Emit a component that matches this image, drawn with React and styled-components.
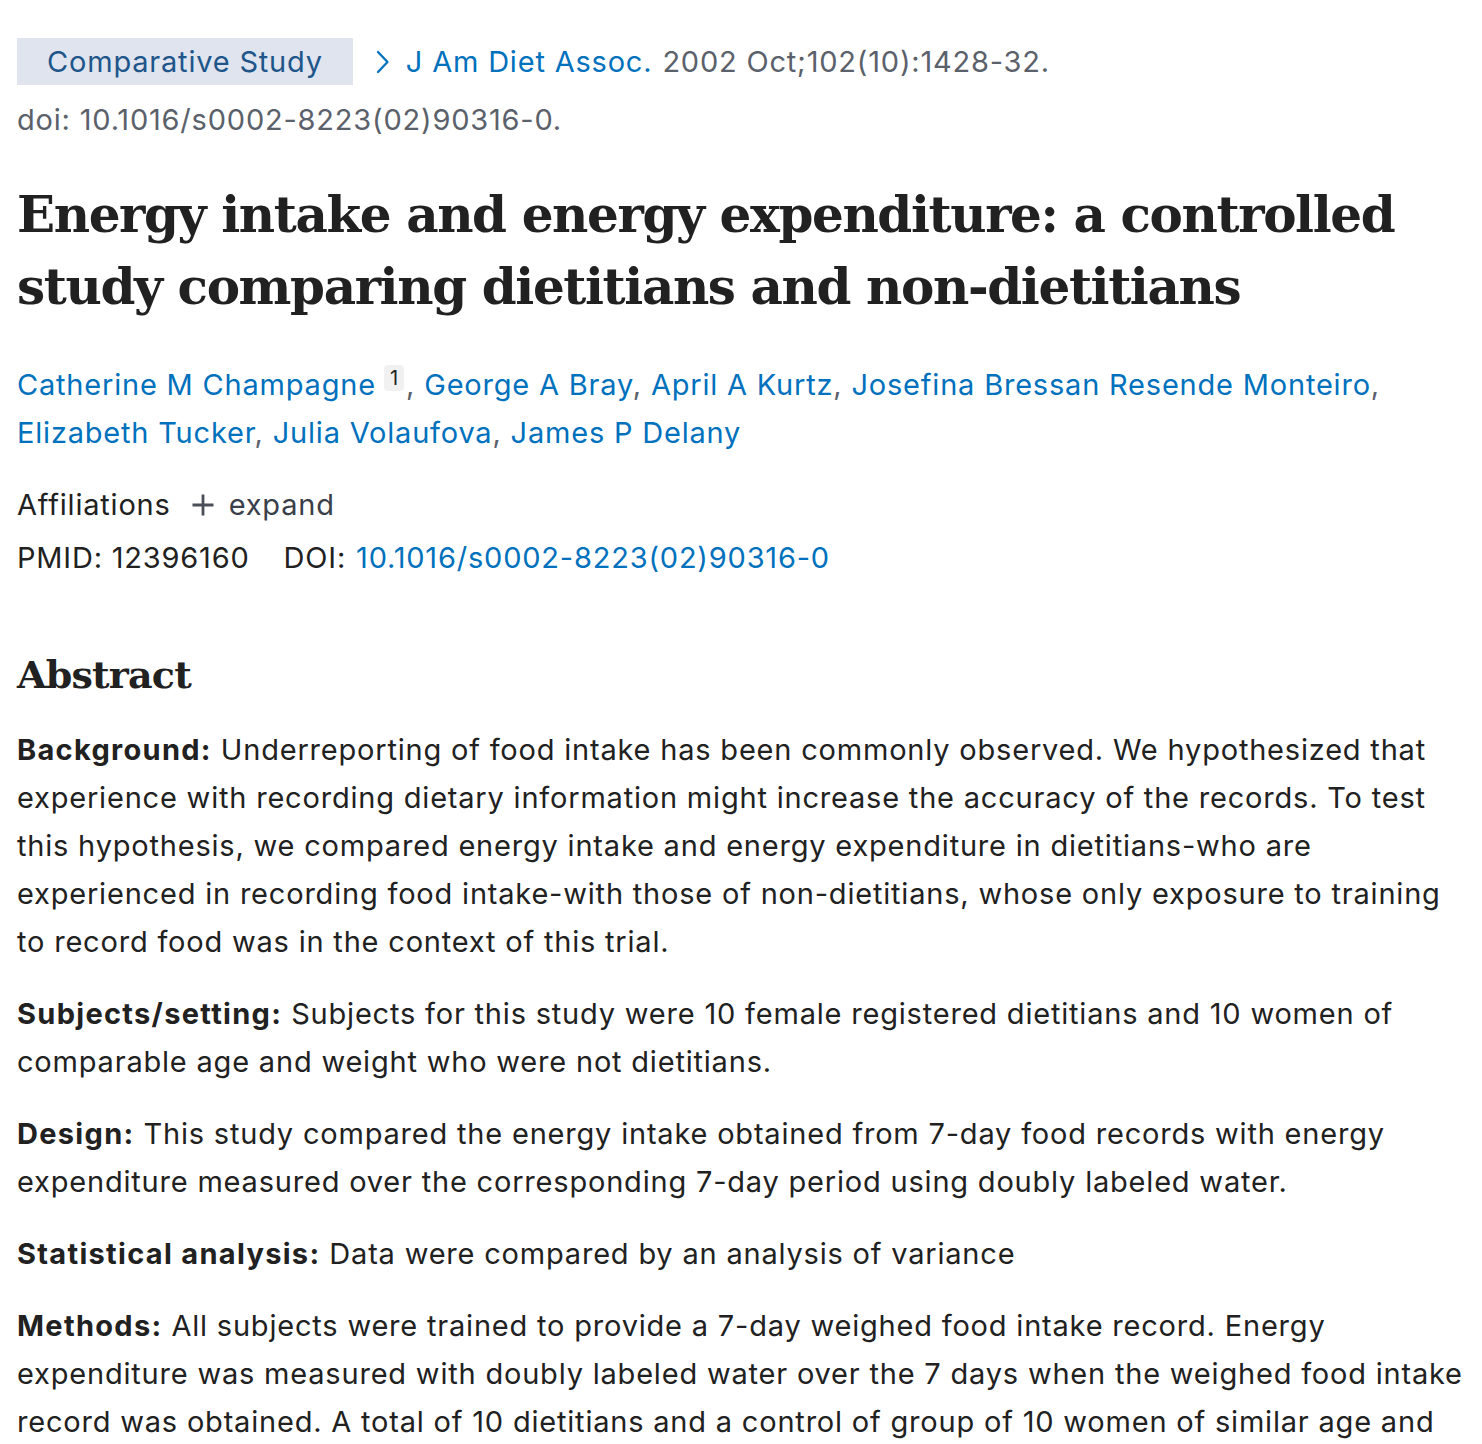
import React from "react";
import styled, { createGlobalStyle } from "styled-components";

const Global = createGlobalStyle`
  html, body { margin: 0; padding: 0; background: #ffffff; }
  body {
    font-family: Inter, "Noto Sans", "Liberation Sans", sans-serif;
    color: #212121;
    -webkit-font-smoothing: antialiased;
  }
  a { text-decoration: none; }
`;

const Page = styled.main`
  padding: 38px 16px 0 17px;
  font-size: 29px;
  letter-spacing: 0.8px;
`;

const CitationRow = styled.div`
  display: flex;
  align-items: center;
  height: 47px;
  color: #5b616b;
  white-space: nowrap;
`;

const TypeBadge = styled.span`
  display: inline-flex;
  align-items: center;
  height: 47px;
  padding: 0 30px;
  background: #dfe4ef;
  color: #20558a;
  margin-right: 21px;
`;

const Chevron = styled.svg`
  width: 18px;
  height: 26px;
  margin-right: 14px;
  flex: none;
`;

const JournalLink = styled.a`
  color: #0071bc;
  margin-right: 10px;
`;

const DoiLine = styled.div`
  color: #5b616b;
  line-height: 48px;
  margin-top: 11px;
`;

const Title = styled.h1`
  font-family: "DejaVu Serif", "Liberation Serif", serif;
  font-weight: 700;
  font-size: 50px;
  line-height: 72px;
  letter-spacing: -1.4px;
  margin: 35px 0 38px;
  color: #212121;
`;

const Authors = styled.div`
  line-height: 48px;
  color: #5b616b;
`;

const AuthorLink = styled.a`
  color: #0071bc;
`;

const AffRef = styled.sup`
  display: inline-block;
  font-size: 20px;
  line-height: 26px;
  letter-spacing: 0;
  padding: 0 6px;
  margin: 0 2px 0 8px;
  background: #f1f1f1;
  border-radius: 4px;
  color: #212121;
  vertical-align: 10px;
`;

const MetaRow = styled.div`
  display: flex;
  align-items: center;
  line-height: 48px;
  margin-top: ${(p) => p.$top || 0}px;
`;

const ExpandToggle = styled.span`
  display: inline-flex;
  align-items: center;
  margin-left: 20px;
  color: #3a3f4a;
  gap: 14px;
`;

const Label = styled.span`
  margin-right: ${(p) => p.$gap || 0}px;
`;

const DoiLink = styled.a`
  color: #0071bc;
  margin-left: 10px;
`;

const AbstractHeading = styled.h2`
  font-family: "DejaVu Serif", "Liberation Serif", serif;
  font-weight: 700;
  font-size: 38px;
  letter-spacing: -0.8px;
  line-height: 50px;
  margin: 68px 0 26px;
`;

const Para = styled.p`
  margin: 0 0 24px;
  line-height: 48px;
`;

const Key = styled.strong`
  font-weight: 700;
  letter-spacing: 1.3px;
`;

const sections = [
  ["Background:", "Underreporting of food intake has been commonly observed. We hypothesized that experience with recording dietary information might increase the accuracy of the records. To test this hypothesis, we compared energy intake and energy expenditure in dietitians-who are experienced in recording food intake-with those of non-dietitians, whose only exposure to training to record food was in the context of this trial."],
  ["Subjects/setting:", "Subjects for this study were 10 female registered dietitians and 10 women of comparable age and weight who were not dietitians."],
  ["Design:", "This study compared the energy intake obtained from 7-day food records with energy expenditure measured over the corresponding 7-day period using doubly labeled water."],
  ["Statistical analysis:", "Data were compared by an analysis of variance"],
  ["Methods:", "All subjects were trained to provide a 7-day weighed food intake record. Energy expenditure was measured with doubly labeled water over the 7 days when the weighed food intake record was obtained. A total of 10 dietitians and a control of group of 10 women of similar age and weight who were not dietitians completed the study."],
];

const authors = [
  "Catherine M Champagne",
  "George A Bray",
  "April A Kurtz",
  "Josefina Bressan Resende Monteiro",
  "Elizabeth Tucker",
  "Julia Volaufova",
  "James P Delany",
];

export default function App() {
  return (
    <>
      <Global />
      <Page>
        <CitationRow>
          <TypeBadge>Comparative Study</TypeBadge>
          <Chevron viewBox="0 0 18 26" fill="none">
            <path d="M4 3 L13.5 13 L4 23" stroke="#0071bc" strokeWidth="2.3" strokeLinecap="round" strokeLinejoin="round" />
          </Chevron>
          <JournalLink href="#">J Am Diet Assoc.</JournalLink>
          <span>2002 Oct;102(10):1428-32.</span>
        </CitationRow>
        <DoiLine>doi: 10.1016/s0002-8223(02)90316-0.</DoiLine>

        <Title>
          Energy intake and energy expenditure: a controlled study comparing dietitians and non&#8209;dietitians
        </Title>

        <Authors>
          {authors.map((a, i) => (
            <React.Fragment key={a}>
              <AuthorLink href="#">{a}</AuthorLink>
              {i === 0 && <AffRef>1</AffRef>}
              {i < authors.length - 1 && ", "}
            </React.Fragment>
          ))}
        </Authors>

        <MetaRow $top={24}>
          <span>Affiliations</span>
          <ExpandToggle>
            <svg width="24" height="24" viewBox="0 0 24 24">
              <path d="M12 1.5 V22.5 M1.5 12 H22.5" stroke="#4a4f58" strokeWidth="2.8" />
            </svg>
            expand
          </ExpandToggle>
        </MetaRow>
        <MetaRow $top={5}>
          <Label $gap={34}>PMID: 12396160</Label>
          <span>DOI:</span>
          <DoiLink href="#">10.1016/s0002-8223(02)90316-0</DoiLink>
        </MetaRow>

        <AbstractHeading>Abstract</AbstractHeading>
        {sections.map(([k, v]) => (
          <Para key={k}>
            <Key>{k}</Key> {v}
          </Para>
        ))}
      </Page>
    </>
  );
}
